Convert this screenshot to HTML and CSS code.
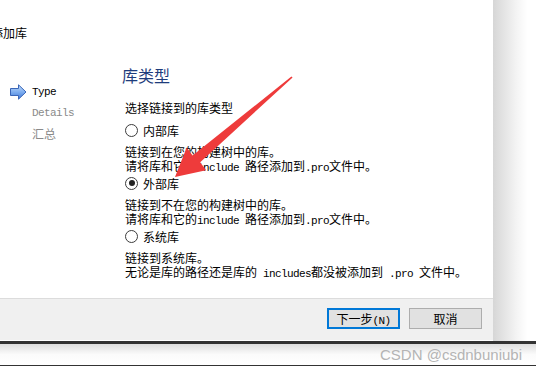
FILE: index.html
```html
<!DOCTYPE html>
<html lang="zh">
<head>
  <meta charset="UTF-8">
  <title>添加库</title>
  <link rel="stylesheet" href="styles.css">
</head>
<body>
  <div class="page">
    <div class="top">
      <div class="dialog">
        <div class="header"><span class="header-title">添加库</span></div>

        <div class="body">
          <ul class="steps">
            <li class="step current">
              <svg class="step-arrow" width="17" height="16" viewBox="0 0 17 16">
                <defs>
                  <linearGradient id="ag" x1="0" y1="0" x2="0" y2="1">
                    <stop offset="0" stop-color="#c4dcf8"/>
                    <stop offset="0.5" stop-color="#7eaef0"/>
                    <stop offset="1" stop-color="#3f78d6"/>
                  </linearGradient>
                </defs>
                <path d="M0.5 4.5 H8.5 V0.8 L16 8 L8.5 15.2 V11.5 H0.5 Z" fill="url(#ag)" stroke="#3a66b8" stroke-width="1"/>
              </svg>
              <span class="mono">Type</span>
            </li>
            <li class="step"><span class="mono">Details</span></li>
            <li class="step">汇总</li>
          </ul>

          <div class="main">
            <h2 class="title">库类型</h2>
            <p class="intro">选择链接到的库类型</p>

            <label class="radio"><span class="dot"></span>内部库</label>
            <p class="desc">链接到在您的构建树中的库。<br>请将库和它的<span class="mono">include </span>路径添加到<span class="mono">.pro</span>文件中。</p>

            <label class="radio"><span class="dot checked"></span>外部库</label>
            <p class="desc">链接到不在您的构建树中的库。<br>请将库和它的<span class="mono">include </span>路径添加到<span class="mono">.pro</span>文件中。</p>

            <label class="radio"><span class="dot"></span>系统库</label>
            <p class="desc">链接到系统库。<br>无论是库的路径还是库的<span class="mono"> includes</span>都没被添加到<span class="mono"> .pro </span>文件中。</p>
          </div>
        </div>

        <div class="footer">
          <button class="btn default">下一步<span class="mono">(N)</span></button>
          <button class="btn">取消</button>
        </div>
      </div>
      <div class="side-shadow"></div>
    </div>
    <div class="rule"></div>
    <div class="below"><span class="mark">CSDN @csdnbuniubi</span></div>

    <!-- red annotation arrow drawn over the dialog -->
    <svg class="annot" width="536" height="366" viewBox="0 0 536 366">
      <polygon fill="#ee3b3b" points="292.6,77.4 200.2,162.3 206.1,170.3 175,177 186.7,147.5 192.6,155.5 291.4,76.6"/>
    </svg>
  </div>
</body>
</html>
```

FILE: styles.css
```css
body { margin: 0; background: #fff; font-family: "Noto Sans CJK SC", "Noto Sans", sans-serif; font-size: 12px; color: #000; }
.page { position: relative; width: 536px; height: 366px; overflow: hidden; }

.top { display: flex; height: 341px; }
.dialog { width: 493px; display: flex; flex-direction: column; background: #fff; }
.side-shadow { flex: 1; background: linear-gradient(to right, #d6d6d6, #f4f4f4 55%, #fff 80%); }

.header { height: 62px; flex: none; padding-top: 25px; box-sizing: border-box; line-height: 16px; }
.header-title { margin-left: -9px; }

.body { flex: 1; min-height: 0; display: flex; }
.steps { list-style: none; margin: 0; padding: 19px 0 0 10px; width: 112px; box-sizing: border-box; }
.step { display: flex; align-items: center; height: 21px; padding-left: 22px; color: #8a8a8a; }
.step.current { padding-left: 0; color: #000; gap: 5px; }
.step-arrow { display: block; }

.mono { font-family: "Liberation Mono", monospace; font-size: 11px; letter-spacing: -0.6px; line-height: 10px; }

.main { padding-top: 3px; padding-left: 13px; }
.title { margin: 0 0 0 -3px; font-size: 16px; font-weight: normal; line-height: 20px; color: #1e3c7c; }
.intro { margin: 15px 0 0; line-height: 16px; }

.radio { display: flex; align-items: center; gap: 5px; height: 16px; margin-top: 2px; }
.intro + .radio { margin-top: 6px; }
.dot { width: 11px; height: 11px; border: 1px solid #3c3c3c; border-radius: 50%; box-sizing: content-box; display: inline-flex; align-items: center; justify-content: center; background: #fff; }
.dot.checked::after { content: ""; width: 6px; height: 6px; border-radius: 50%; background: #222; }

.desc { margin: 7px 0 0; line-height: 14px; }

.footer { height: 43px; flex: none; box-sizing: border-box; border-top: 1px solid #dcdcdc; border-bottom: 1px solid #fff; background: #f0f0f0; display: flex; justify-content: flex-end; gap: 9px; padding: 9px 11px 0 0; }
.btn { width: 73px; height: 21px; padding: 0; font: inherit; background: #e1e1e1; border: 1px solid #adadad; color: #000; }
.btn.default { border-color: #0078d7; box-shadow: inset 0 0 0 1px #0078d7; }

.rule { height: 3px; background: #333; }
.below { height: 21px; border-bottom: 2px solid #333; background: linear-gradient(to bottom, #dedede, #fbfbfb 50%, #fff); display: flex; justify-content: flex-end; align-items: center; padding-right: 14px; }
.mark { font-family: "Liberation Sans", Arial, sans-serif; font-size: 15px; color: #b4b4b4; }

.annot { position: absolute; left: 0; top: 0; pointer-events: none; }
```
